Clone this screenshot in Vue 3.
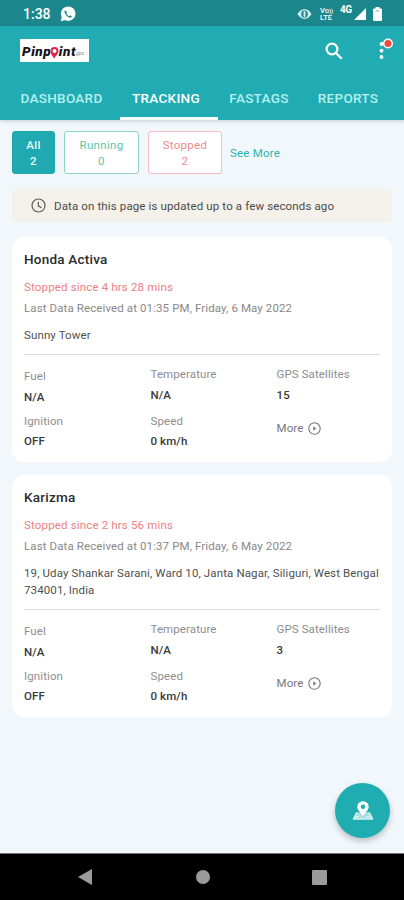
<script setup>
const tabs = [
  { name: 'DASHBOARD', width: 120, shift: 3 },
  { name: 'TRACKING', width: 98, shift: -6, active: true },
  { name: 'FASTAGS', width: 82, shift: 0 },
  { name: 'REPORTS', width: 96, shift: 0 },
]
const chips = [
  { label: 'All', count: 2, kind: 'all' },
  { label: 'Running', count: 0, kind: 'running' },
  { label: 'Stopped', count: 2, kind: 'stopped' },
]
const vehicles = [
  {
    name: 'Honda Activa',
    status: 'Stopped since 4 hrs 28 mins',
    received: 'Last Data Received at 01:35 PM, Friday, 6 May 2022',
    address: ['Sunny Tower'],
    satellites: 15,
  },
  {
    name: 'Karizma',
    status: 'Stopped since 2 hrs 56 mins',
    received: 'Last Data Received at 01:37 PM, Friday, 6 May 2022',
    address: ['19, Uday Shankar Sarani, Ward 10, Janta Nagar, Siliguri, West Bengal', '734001, India'],
    satellites: 3,
  },
]
</script>

<template>
  <div class="screen">
    <div class="status">
      <span class="time">1:38</span>
      <svg class="call" width="16" height="16" viewBox="0 0 16 16">
        <circle cx="8.2" cy="7.7" r="7.3" fill="#fff" />
        <path d="M.7 15.3 2 10.5l3.5 3.6z" fill="#fff" />
        <path d="M5.2 4.2c-.8.7-.9 1.8-.3 3 .9 1.900 2.300 3.400 4.200 4.200 1.300.5 2.400.2 2.900-.8l-1.900-1.300-1.100.9C7.800 9.600 6.900 8.600 6.300 7.200l.8-1z" fill="#1b878d" />
      </svg>
      <svg class="eye" width="15" height="12" viewBox="0 0 15 12">
        <path d="M.5 6C2.200 3.200 4.700 1 7.500 1s5.300 2.200 7 5c-1.700 2.800-4.200 5-7 5S2.200 8.800.5 6Z" fill="#d5eeee" />
        <ellipse cx="7.500" cy="6" rx="3.300" ry="3.800" fill="#1b878d" />
        <rect x="6.500" y="3" width="2" height="6" rx="1" fill="#d5eeee" />
      </svg>
      <span class="volte"><span>Vo<small>))</small></span><span>LTE</span></span>
      <span class="net">4G</span>
      <svg class="signal" width="12" height="12" viewBox="0 0 12 12"><path d="M12 0v12H0z" fill="#fff" /></svg>
      <svg class="battery" width="9" height="14" viewBox="0 0 9 14">
        <path d="M2.500 0h4v1.500H8q1 0 1 1V13q0 1-1 1H1q-1 0-1-1V2.500q0-1 1-1h1.500z" fill="#fff" />
        <path d="M2.500 3.800h4" stroke="#75b5b8" stroke-width="1" />
      </svg>
    </div>

    <header class="header">
      <div class="bar">
        <div class="logo">
          <span>Pinp</span>
          <svg width="9" height="13" viewBox="0 0 9 13">
            <path d="M4 12.500C2.500 9.500.5 7.800.5 5A4 4 0 0 1 8.500 5C8.500 7.800 6 9.500 4 12.500Z" fill="#e0244e" />
            <circle cx="4.500" cy="5" r="2" fill="#fff" />
          </svg>
          <span>int</span>
          <i class="tail">gps</i>
        </div>
        <svg class="search" width="18" height="18" viewBox="0 0 18 18" fill="none" stroke="#fff" stroke-width="2.200">
          <circle cx="7" cy="7" r="5.400" />
          <path d="m11 11 5.700 5.700" />
        </svg>
        <svg class="menu" width="16" height="22" viewBox="0 0 16 22">
          <g fill="#fff">
            <circle cx="4.500" cy="6" r="1.900" /><circle cx="4.500" cy="12.700" r="1.900" /><circle cx="4.500" cy="19" r="1.900" />
            <circle cx="11" cy="5.500" r="5" />
          </g>
          <circle cx="11" cy="5.500" r="3.500" fill="#f2493d" />
        </svg>
      </div>
      <nav class="tabs">
        <div
          v-for="t in tabs" :key="t.name" class="tab" :class="{ active: t.active }"
          :style="{ width: t.width + 'px', paddingLeft: Math.max(t.shift, 0) + 'px', paddingRight: Math.max(-t.shift, 0) + 'px' }"
        >
          <span>{{ t.name }}</span>
        </div>
      </nav>
    </header>

    <main class="content">
      <div class="chips">
        <div v-for="c in chips" :key="c.kind" class="chip" :class="c.kind">
          <span>{{ c.label }}</span><span>{{ c.count }}</span>
        </div>
        <span class="see">See More</span>
      </div>

      <div class="notice">
        <svg width="15" height="15" viewBox="0 0 15 15" fill="none" stroke="#5b5a57" stroke-width="1.200">
          <circle cx="7.500" cy="7.500" r="6.500" /><path d="M7.300 3.800v4l3.200 2" />
        </svg>
        <span>Data on this page is updated up to a few seconds ago</span>
      </div>

      <section v-for="v in vehicles" :key="v.name" class="card">
        <h2>{{ v.name }}</h2>
        <p class="stopped-since">{{ v.status }}</p>
        <p class="received">{{ v.received }}</p>
        <p class="address"><span v-for="line in v.address" :key="line">{{ line }}</span></p>
        <div class="stats">
          <div class="col first">
            <span class="label">Fuel</span><b class="na">N/A</b>
            <span class="label">Ignition</span><b>OFF</b>
          </div>
          <div class="col">
            <span class="label">Temperature</span><b class="na">N/A</b>
            <span class="label">Speed</span><b>0 km/h</b>
          </div>
          <div class="col">
            <span class="label">GPS Satellites</span><b class="sat">{{ v.satellites }}</b>
            <span class="more">
              <span>More</span>
              <svg width="13" height="13" viewBox="0 0 13 13" fill="none" stroke="#777" stroke-width="1.100">
                <circle cx="6.500" cy="6.500" r="5.700" /><path d="m5.300 4.300 3 2.200-3 2.200z" fill="#777" stroke="none" />
              </svg>
            </span>
          </div>
        </div>
      </section>
    </main>

    <button class="fab" aria-label="Map">
      <svg width="22" height="20" viewBox="0 0 22 20">
        <path d="M4 11.500h14l3.500 7H.5z" fill="#a9dfdf" />
        <path d="M6.500 12H4.300L1.200 18h19.600l-3.100-6h-2.200M3 16.200l4-1.200M14 15.500l4.500.7" fill="none" stroke="#e9fafa" stroke-width="1" />
        <path d="M11 15C8.500 11.500 5.300 9 5.300 5.700a5.700 5.500 0 0 1 11.400 0C16.700 9 13.500 11.500 11 15Z" fill="#fff" />
        <circle cx="11" cy="5.700" r="2.200" fill="#20aeb2" />
      </svg>
    </button>

    <footer class="sysnav">
      <svg width="14" height="16" viewBox="0 0 14 16"><path d="M14 0v16L0 8z" fill="#9b9b9b" /></svg>
      <i class="home"></i>
      <i class="recent"></i>
    </footer>
  </div>
</template>

<style>
body { margin: 0; }
</style>
<style scoped>
.screen { position: relative; width: 404px; height: 900px; display: flex; flex-direction: column; background: #f2f7fb; font-family: Roboto, "Liberation Sans", sans-serif; overflow: hidden; }
.status { height: 26px; flex: none; display: flex; align-items: center; background: #1b878d; color: #fff; padding: 2px 22px 0 23px; box-sizing: border-box; }
.time { font-size: 14px; font-weight: 500; width: 37px; }
.eye { margin-left: auto; margin-right: 8px; }
.volte { width: 20px; display: flex; flex-direction: column; font-size: 7.500px; line-height: 7.500px; font-weight: 500; white-space: nowrap; }
.volte small { font-size: 6px; }
.net { width: 14px; font-size: 10px; line-height: 10px; font-weight: 700; margin-bottom: 8px; letter-spacing: -.6px; }
.signal { margin-right: 7px; }
.header { height: 94px; flex: none; background: #20acb2; display: flex; flex-direction: column; box-shadow: 0 1px 4px #00000030; }
.bar { height: 50px; display: flex; align-items: center; padding: 0 10px 0 20px; }
.logo { width: 69px; height: 23px; box-sizing: border-box; background: #fff; color: #18141a; display: flex; align-items: center; padding-left: 2px; font: italic 900 13.500px Roboto, sans-serif; letter-spacing: .6px; margin-top: -1px; }
.logo svg { margin: 4px -.5px 0 -1px; }
.tail { font-size: 5px; font-weight: 400; letter-spacing: 0; color: #888; margin-top: 4px; }
.search { margin-left: 236px; }
.menu { margin-left: 34px; margin-top: -5px; }
.tabs { display: flex; height: 44px; }
.tab { display: flex; align-items: center; justify-content: center; box-sizing: border-box; padding-top: 2px; border-bottom: 3px solid transparent; color: #b5f0f1; font-size: 13.500px; font-weight: 500; letter-spacing: .3px; white-space: nowrap; }
.tab.active { color: #fff; border-color: #f5fbfc; }
.content { padding: 11px 12px 0; }
.chips { display: flex; align-items: center; gap: 9px; height: 43px; }
.chip { width: 75px; height: 43px; box-sizing: border-box; border: 1px solid; border-radius: 3px; background: #fff; display: flex; flex-direction: column; align-items: center; justify-content: center; font-size: 11.500px; line-height: 16px; letter-spacing: .3px; }
.chip.all { width: 43px; background: #20a9b0; border-color: #20a9b0; color: #e9fbfb; font-weight: 500; }
.chip.running { color: #61c3a4; border-color: #8dd5c2; }
.chip.stopped { width: 74px; color: #f08a8c; border-color: #f5bac2; }
.see { color: #2ab3af; font-size: 11.500px; letter-spacing: .2px; margin-left: -1px; }
.notice { margin-top: 15px; height: 33px; width: 380px; background: #f4f1eb; border-radius: 4px; display: flex; align-items: center; gap: 8px; padding-left: 19px; box-sizing: border-box; color: #4c4a48; font-size: 11.500px; letter-spacing: .13px; white-space: nowrap; }
.card { margin-top: 15px; padding: 12px 12px 13px; background: #fff; border-radius: 12px; }
.card + .card { margin-top: 13px; }
h2 { margin: 0; font-size: 13.500px; line-height: 20px; font-weight: 500; color: #2b2b2b; letter-spacing: .22px; }
p { margin: 0; white-space: nowrap; }
.stopped-since { margin-top: 9px; font-size: 11.500px; line-height: 18px; color: #ee8082; letter-spacing: .16px; }
.received { margin-top: 2px; font-size: 11.500px; line-height: 20px; color: #888; letter-spacing: .11px; }
.address { margin-top: 9px; display: flex; flex-direction: column; font-size: 11.500px; line-height: 17px; color: #505050; letter-spacing: .12px; }
.stats { margin-top: 10px; border-top: 1px solid #dcdcdc; display: grid; grid-template-columns: 126.500px 126px 1fr; height: 94px; }
.col { display: flex; flex-direction: column; align-items: flex-start; padding-top: 11px; font-size: 11.500px; line-height: 16px; letter-spacing: .1px; }
.col.first { padding-top: 13px; }
.label { color: #8e8e8e; }
.col b { margin-top: 4px; font-weight: 500; font-size: 11.500px; color: #3a3a3a; }
.col b.na, .col b.sat { margin-top: 5px; margin-bottom: 10px; }
.first b.na { margin-bottom: 8px; }
.more { margin-top: 7px; display: flex; align-items: center; gap: 5px; color: #777; }
.fab { position: absolute; left: 335px; top: 783px; width: 55px; height: 55px; border: 0; border-radius: 50%; background: #20adb1; display: flex; align-items: center; justify-content: center; padding: 0; box-shadow: 0 3px 6px #0000003d; }
.sysnav { margin-top: auto; height: 47px; box-sizing: border-box; border-top: 1px solid #777; background: #000; display: flex; align-items: center; padding-left: 78px; }
.home { width: 14px; height: 14px; border-radius: 50%; background: #9b9b9b; margin-left: 104px; }
.recent { width: 15px; height: 15px; background: #9b9b9b; margin-left: 102px; border-radius: 1px; }
</style>
